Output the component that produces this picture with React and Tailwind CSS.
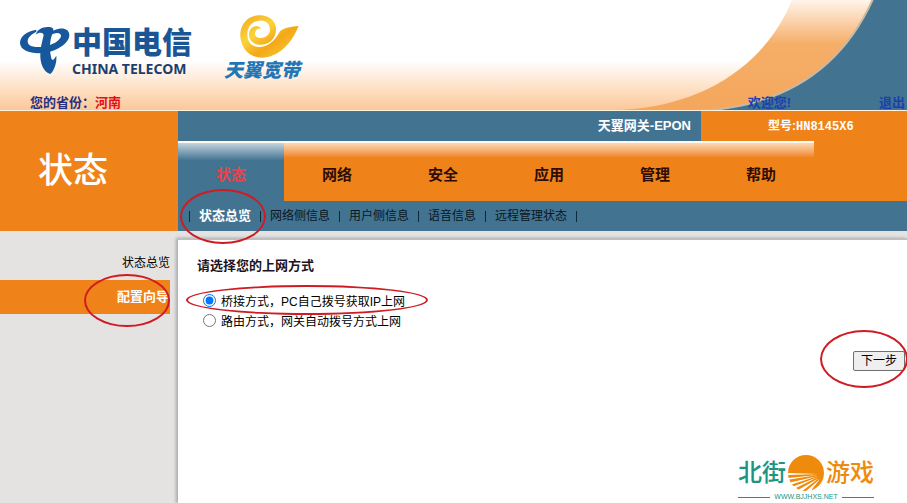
import React from "react";

const tabs = ["状态", "网络", "安全", "应用", "管理", "帮助"];
const subLinks = ["网络侧信息", "用户侧信息", "语音信息", "远程管理状态"];

const Ring = ({ className }) => (
  <span
    aria-hidden="true"
    className={`pointer-events-none absolute z-10 rounded-[50%] border-2 border-[#cf1c24] ${className}`}
  />
);

const Divider = () => (
  <span
    aria-hidden="true"
    className="flex h-[11px] w-[19px] shrink-0 justify-center"
  >
    <span className="w-px bg-[#0c2a3c]" />
  </span>
);

const TelecomLogo = () => (
  <div className="flex items-start">
    <svg
      viewBox="15 15 156 150"
      className="h-[50px] w-[52px]"
      fill="#17589c"
    >
      <path d="M64 29C35 33 14 50 15 70C17 95 55 103 90 98C130 92 163 68 163 45C163 29 148 23 132 26C120 28 110 34 103 40L104 47C118 37 137 35 138 47C138 60 112 76 85 80C54 84 38 78 38 64C38 52 50 42 64 35Z" />
      <path d="M62 44C68 26 88 18 108 22C118 25 116 34 112 42C104 62 103 88 108 110C110 122 114 124 124 107C126 130 117 152 106 162C86 156 74 130 76 98C77 78 83 60 86 46C84 36 72 37 62 44Z" />
    </svg>
    <div className="flex flex-col">
      <span className="text-[30px] leading-9 font-black text-[#1a5596]">
        中国电信
      </span>
      <span className="font-['Noto_Sans'] text-[14px] leading-4 font-bold text-[#1d3f6e]">
        CHINA TELECOM
      </span>
    </div>
  </div>
);

const TianyiLogo = () => (
  <div className="flex flex-col">
    <svg viewBox="60 10 186 135" className="h-[45px] w-[62px] self-end">
      <defs>
        <linearGradient id="gold" x1="0" y1="0" x2="1" y2="1">
          <stop offset="0" stopColor="#f0a81e" />
          <stop offset="0.35" stopColor="#fbd23a" />
          <stop offset="0.6" stopColor="#f3a818" />
          <stop offset="1" stopColor="#fbd23a" />
        </linearGradient>
      </defs>
      <path
        fill="url(#gold)"
        d="M174 55C174 30 152 13 122 14C88 15 64 45 67 78C70 115 98 143 135 141C185 138 222 95 242 46C220 48 199 50 186 62C176 80 160 106 127 109C102 110 88 94 88 72C88 48 102 32 124 30C146 28 156 42 156 58C156 72 142 82 127 82C117 82 110 76 111 67C112 58 120 52 130 54C121 38 94 46 93 70C92 90 108 103 130 102C157 101 174 82 174 55Z"
      />
    </svg>
    <span className="text-[19px] leading-6 font-black text-[#2276b6] italic">
      天翼宽带
    </span>
  </div>
);

const Header = () => (
  <header className="relative flex h-[111px] flex-col justify-between border-b border-[#fff3dd] bg-linear-to-b from-white from-55% to-[#fbc898]">
    <svg
      aria-hidden="true"
      viewBox="0 0 307 110"
      className="absolute top-0 right-0 h-[110px] w-[307px]"
    >
      <defs>
        <linearGradient id="swoosh" x1="0" y1="0" x2="0" y2="1">
          <stop offset="0" stopColor="#fff4ea" />
          <stop offset="0.4" stopColor="#f5ae68" />
          <stop offset="1" stopColor="#f4a75c" />
        </linearGradient>
      </defs>
      <path
        fill="url(#swoosh)"
        d="M192 0C172 50 120 105 20 110H307V0z"
      />
      <path
        fill="#427492"
        stroke="#c9b9a4"
        strokeWidth="2"
        d="M273-1C250 50 203 106 98 111H310V-1z"
      />
    </svg>
    <div className="relative flex gap-8 pl-5">
      <div className="pt-[25px]">
        <TelecomLogo />
      </div>
      <div className="pt-[14px]">
        <TianyiLogo />
      </div>
    </div>
    <div className="relative -mb-px flex justify-between pl-[30px] text-[13px] leading-4 font-bold text-[#28307e]">
      <p>
        您的省份：<span className="text-[#e3101c]">河南</span>
      </p>
      <div className="flex gap-[88px] pr-[2px] text-[#1c3fae]">
        <span>欢迎您!</span>
        <a href="#logout">退出</a>
      </div>
    </div>
  </header>
);

const Banner = () => (
  <div className="flex bg-[#427492]">
    <div className="w-[178px] shrink-0 bg-[#ef831a] pt-8 pl-[38px]">
      <h1 className="text-[35px] leading-[56px] font-medium text-white">
        状态
      </h1>
    </div>
    <div className="min-w-0 flex-1">
      <div className="flex h-[30px] text-[13px] leading-[30px] font-bold text-white">
        <div className="flex-1 pr-[10px] text-right">天翼网关-EPON</div>
        <div className="w-[206px] bg-[#ef831a] pl-[67px] text-[12px]">
          型号:<span className="font-['Liberation_Mono']">HN8145X6</span>
        </div>
      </div>
      <nav className="flex h-[60px] bg-[#ef831a]">
        {tabs.map((tab, i) => (
          <a
            key={tab}
            href={`#tab-${i}`}
            className={`w-[106px] border-t-2 border-[#fffaf2] pt-[2px] text-center text-[15px] leading-[60px] font-bold ${
              i === 0
                ? "bg-[#427492] bg-linear-to-b from-[#c4d4de] to-[#427492] to-30% text-[#e8434a]"
                : "bg-linear-to-b from-[#fbd9b4] to-[#ef831a] to-25% text-[#2d0d05]"
            }`}
          >
            {tab}
          </a>
        ))}
      </nav>
      <nav className="flex h-[30px] items-center pl-[2px] text-[12px] text-[#0a1622]">
        <Divider />
        <span className="relative">
          <a href="#overview" className="text-[13px] font-bold text-white">
            状态总览
          </a>
          <Ring className="-top-[17px] -left-[19px] h-[55px] w-[86px]" />
        </span>
        <Divider />
        {subLinks.map((label) => (
          <React.Fragment key={label}>
            <a href={`#${label}`}>{label}</a>
            <Divider />
          </React.Fragment>
        ))}
      </nav>
    </div>
  </div>
);

const Sidebar = () => (
  <aside className="flex w-[178px] shrink-0 pt-[15px]">
    <nav className="flex w-[170px] flex-col text-right text-[12px] leading-[34px] text-black">
      <a href="#status">状态总览</a>
      <a
        href="#wizard"
        className="relative bg-[#ef831a] pr-px text-[13px] font-bold text-white"
      >
        配置向导
        <Ring className="-top-[6px] right-0 h-[53px] w-[86px]" />
      </a>
    </nav>
  </aside>
);

const Watermark = () => (
  <div className="absolute right-[33px] bottom-0 flex flex-col">
    <div className="flex items-center gap-[2px] text-[24px] leading-9 font-medium whitespace-nowrap">
      <span className="text-[#1b9582]">北街</span>
      <svg viewBox="0 0 36 36" className="h-9 w-9 shrink-0">
        <circle cx="18" cy="18" r="18" fill="#ee8a0c" />
        {/* furrows fanning out from the right edge of the sun */}
        <path
          fill="#fff"
          d="M30 19L-1 18V20zM30 20L-1 23V25zM30 21L0 28L2 30zM30 22L4 32L6 34zM31 23L10 35L13 37zM32 24L18 36L21 38z"
        />
      </svg>
      <span className="text-[#ee8a0c]">游戏</span>
    </div>
    <div className="flex items-center gap-1 text-[7px] leading-[12px] text-[#1b9582]">
      <span className="h-px flex-1 bg-[#1b9582]" />
      WWW.BJJHXS.NET
      <span className="h-px flex-1 bg-[#1b9582]" />
    </div>
  </div>
);

const App = () => {
  return (
    <div className="relative flex min-h-screen flex-col bg-[#e4e3e2] font-['Liberation_Sans','Noto_Sans_CJK_SC',sans-serif]">
      <Header />
      <Banner />
      <div className="flex flex-1">
        <Sidebar />
        <main className="mt-[7px] min-w-0 flex-1 border-t-2 border-[#bfbfbf] bg-white shadow-[-2px_0_3px_#a8a8a8]">
          <form className="flex flex-col pt-4 text-[12px] text-black">
            <h2 className="pl-[19px] text-[13px] leading-5 font-bold text-[#1c1420]">
              请选择您的上网方式
            </h2>
            <div className="relative mt-[14px] ml-[25px] flex flex-col items-start">
              <label className="flex h-5 items-center gap-[5px]">
                <input
                  type="radio"
                  name="mode"
                  defaultChecked
                  className="h-[13px] w-[13px]"
                />
                <span className="pt-1">桥接方式，PC自己拨号获取IP上网</span>
              </label>
              <label className="flex h-5 items-center gap-[5px]">
                <input
                  type="radio"
                  name="mode"
                  className="h-[13px] w-[13px]"
                />
                <span className="pt-1">路由方式，网关自动拨号方式上网</span>
              </label>
              <Ring className="-top-[5px] -left-[17px] h-[30px] w-[242px]" />
            </div>
            <div className="relative mt-[21px] mr-[2px] self-end">
              <button
                type="button"
                className="h-5 w-[52px] rounded-[2px] border border-[#6f6f6f] bg-[#efefef] leading-[18px]"
              >
                下一步
              </button>
              <Ring className="-top-[21px] -left-[33px] h-[58px] w-[88px]" />
            </div>
          </form>
        </main>
      </div>
      <Watermark />
    </div>
  );
};

export default App;
